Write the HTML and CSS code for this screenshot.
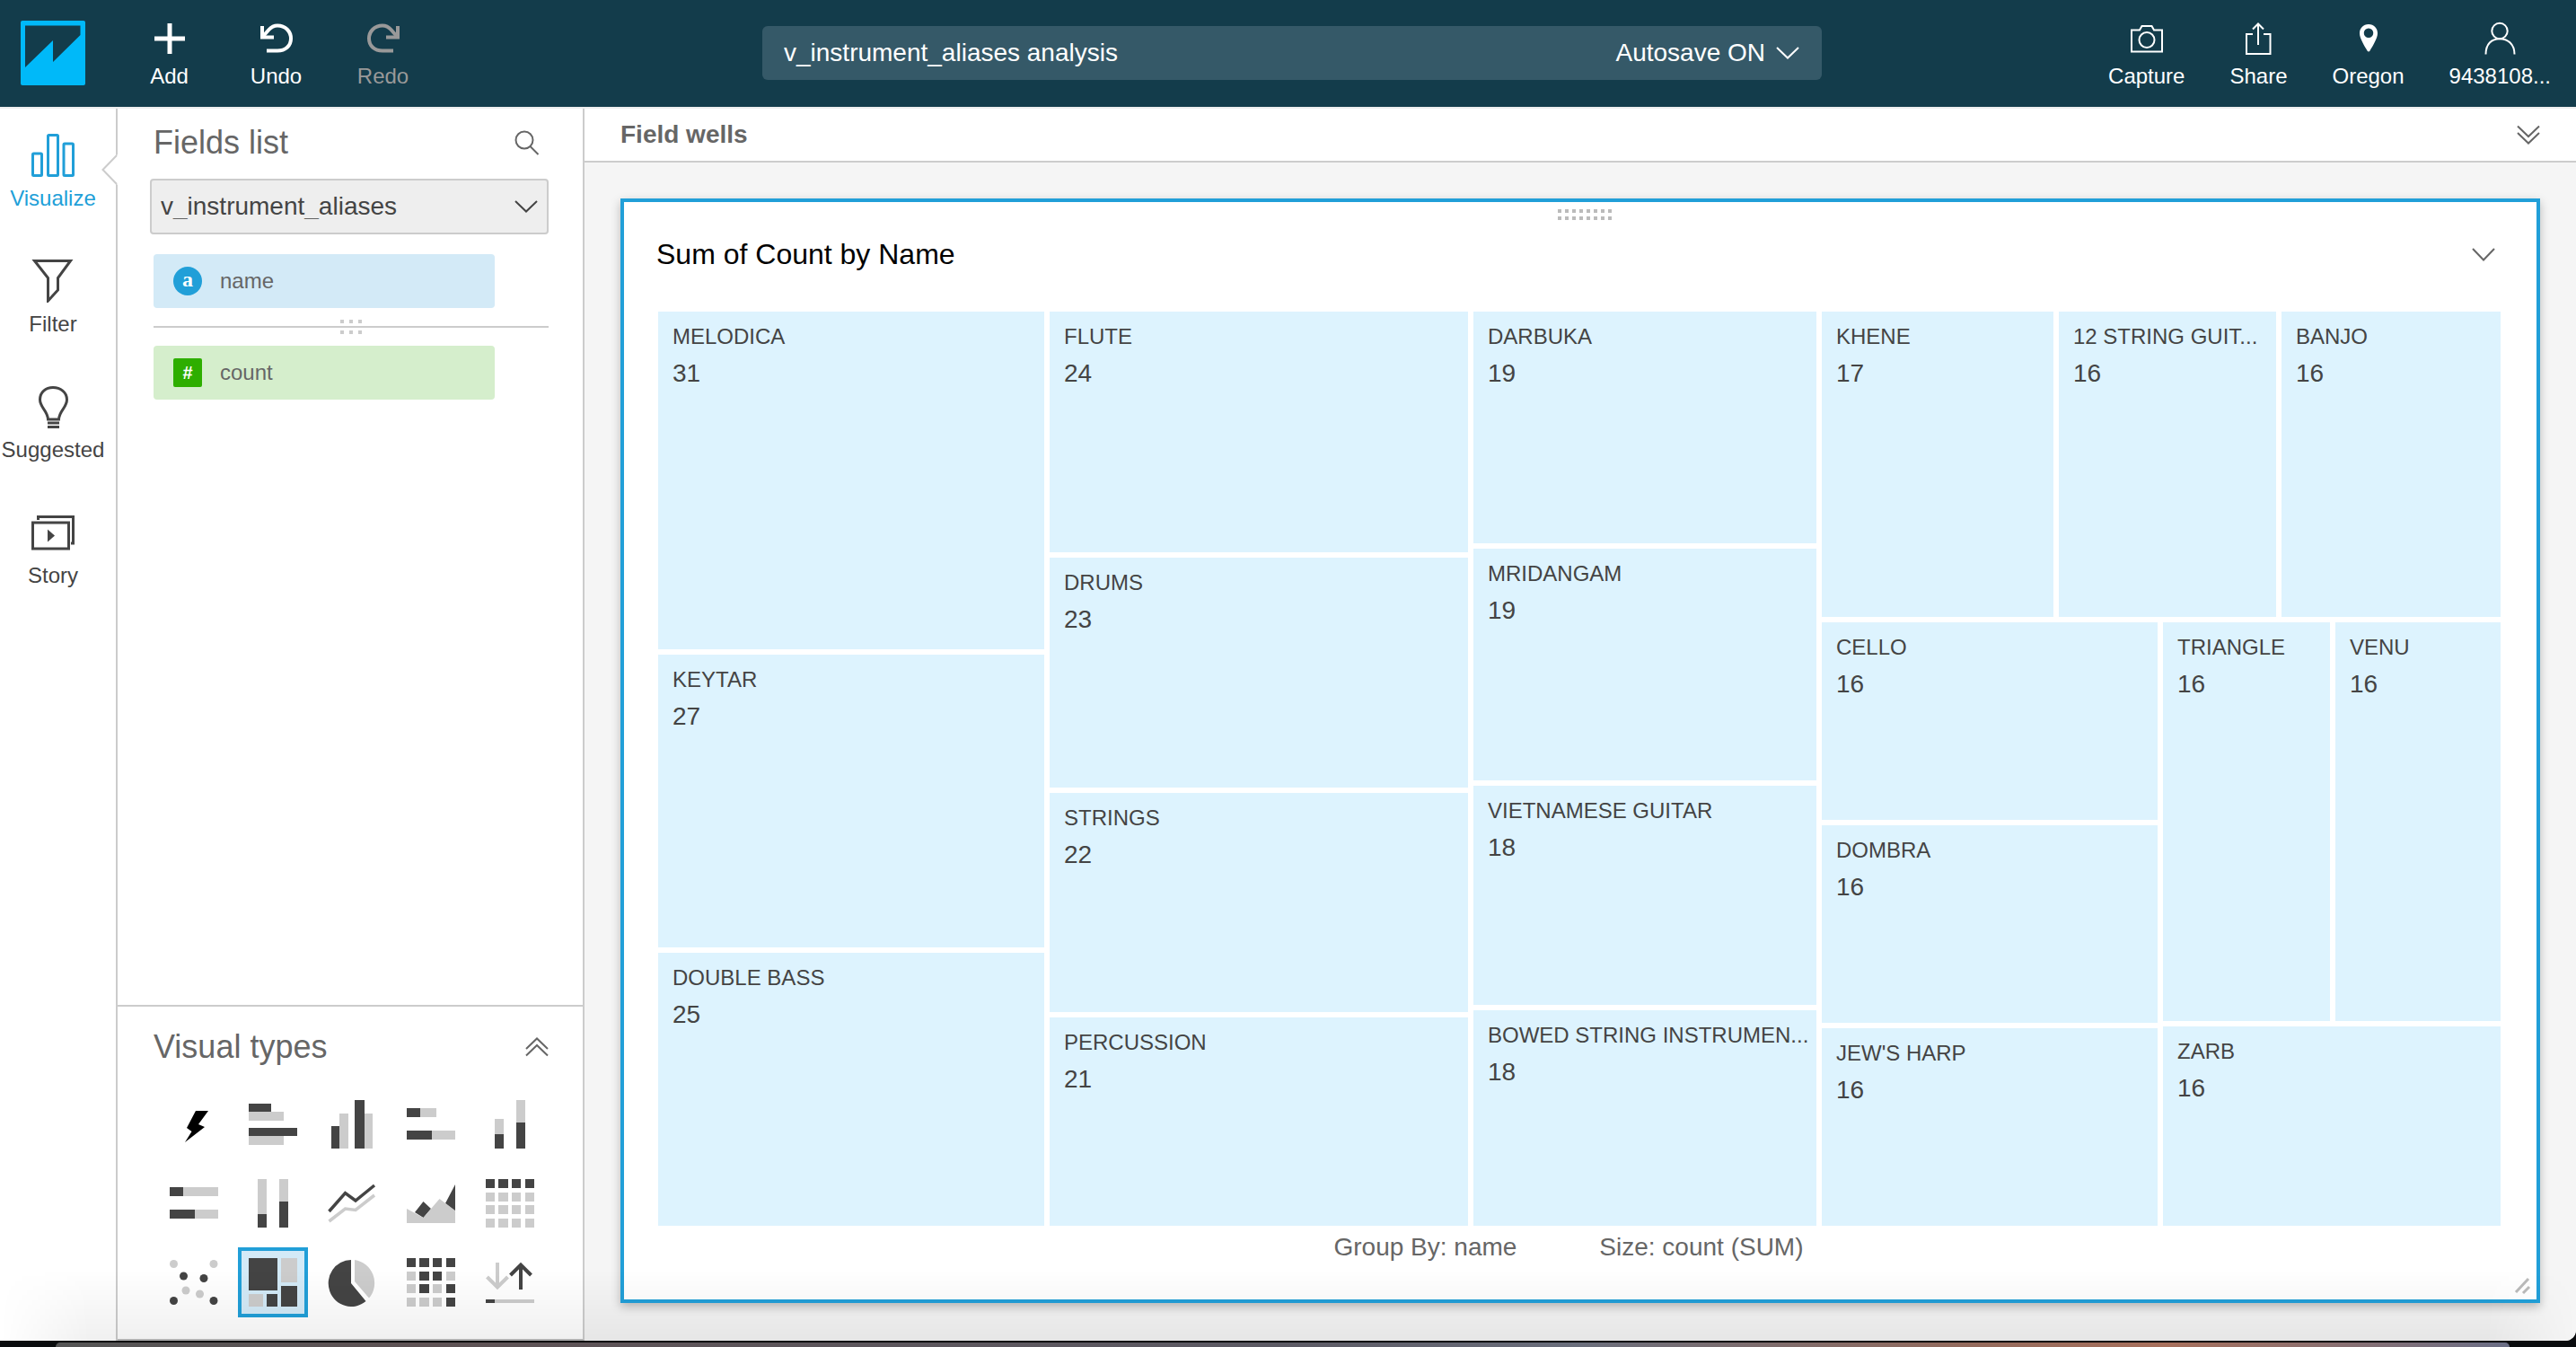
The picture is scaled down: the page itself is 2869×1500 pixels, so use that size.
FILE: index.html
```html
<!DOCTYPE html>
<html lang="en">
<head>
<meta charset="utf-8">
<title>v_instrument_aliases analysis</title>
<meta name="viewport" content="width=device-width, initial-scale=1">
<link rel="stylesheet" href="styles.css">
</head>
<body>
<div class="app">
  <header class="topbar">
    <div class="topbar-left">
      <a class="logo" href="#" aria-label="Home">
        <svg width="72" height="72" viewBox="0 0 72 72"><rect width="72" height="72" rx="2" fill="#00b9f9"/><path d="M5 5.500H66.500V16L36 46V22L5 52Z" fill="#133c4b"/></svg>
      </a>
      <button class="tool" type="button">
        <svg width="40" height="40" viewBox="0 0 40 40"><path d="M20 3V37M3 20H37" stroke-width="5"/></svg>
        <span>Add</span>
      </button>
      <button class="tool" type="button">
        <svg width="40" height="40" viewBox="0 0 40 40"><path d="M4 6V18.500H17" stroke-width="4"/><path d="M4.500 18L11.500 10Q15.500 5.500 21 5.500C30 5.500 36 12 36 20S30 33.500 21 33.500H9" stroke-width="4"/></svg>
        <span>Undo</span>
      </button>
      <button class="tool tool-off" type="button" disabled>
        <svg width="40" height="40" viewBox="0 0 40 40"><path d="M36 6V18.500H23" stroke-width="4"/><path d="M35.500 18L28.500 10Q24.500 5.500 19 5.500C10 5.500 4 12 4 20S10 33.500 19 33.500H31" stroke-width="4"/></svg>
        <span>Redo</span>
      </button>
    </div>
    <div class="titlebar">
      <input class="titlebar-name" type="text" value="v_instrument_aliases analysis" aria-label="Analysis name">
      <button class="autosave" type="button">Autosave ON
        <svg width="26" height="14" viewBox="0 0 26 14"><path d="M1 1L13 12.500L25 1"/></svg>
      </button>
    </div>
    <div class="topbar-right">
      <button class="action" type="button">
        <svg width="40" height="40" viewBox="0 0 40 40"><path d="M3 10.500H12L14.500 6H25.500L28 10.500H37V34.500H3Z"/><circle cx="20" cy="21.500" r="8.500"/></svg>
        <span>Capture</span>
      </button>
      <button class="action" type="button">
        <svg width="40" height="40" viewBox="0 0 40 40"><path d="M14 15H7V37H33.500V15H26M20 27V4M14 9.500L20 3.500L26 9.500"/></svg>
        <span>Share</span>
      </button>
      <button class="action" type="button">
        <svg width="40" height="40" viewBox="0 0 40 40"><path d="M20 4C14 4 10 8.500 10 14C10 20 16 29 18.500 33.500Q20 35.500 21.500 33.500C24 29 30 20 30 14C30 8.500 26 4 20 4ZM20 8.500A5.200 5.200 0 1 1 20 19A5.200 5.200 0 1 1 20 8.500Z" fill="#fff" fill-rule="evenodd" stroke="none"/></svg>
        <span>Oregon</span>
      </button>
      <button class="action" type="button">
        <svg width="40" height="40" viewBox="0 0 40 40"><circle cx="20" cy="11.500" r="8.700"/><path d="M4.500 37.500C4.500 26 11 20.200 20 20.200S36.500 26 36.500 37.500"/></svg>
        <span>9438108...</span>
      </button>
    </div>
  </header>

  <div class="body">
    <nav class="rail">
      <a class="rail-item rail-on" href="#">
        <svg width="48" height="48" viewBox="0 0 48 48"><rect x="1.500" y="22" width="10" height="24.500" rx="1"/><rect x="18.500" y="1.500" width="11" height="45" rx="1"/><rect x="36" y="11" width="10.500" height="35.500" rx="1"/></svg>
        <span>Visualize</span>
      </a>
      <a class="rail-item" href="#">
        <svg width="48" height="48" viewBox="0 0 48 48"><path d="M3.500 1.500H43.500L29.500 20.500V34L18.500 46V20.500Z"/></svg>
        <span>Filter</span>
      </a>
      <a class="rail-item" href="#">
        <svg width="48" height="48" viewBox="0 0 48 48"><path d="M18.500 38C18 28 9.500 25 9.500 16C9.500 7.500 16 2.500 24 2.500S39.500 7.500 39.500 16C39.500 25 31 28 30.500 38ZM18 42H31M18 46.500H31"/></svg>
        <span>Suggested</span>
      </a>
      <a class="rail-item" href="#">
        <svg width="48" height="48" viewBox="0 0 48 48"><rect x="1.500" y="13" width="40" height="29"/><path d="M7.500 10V6.500H46.500V36H44"/><path d="M18 20.500L26 27.500L18 34.500Z" fill="#444" stroke="none"/></svg>
        <span>Story</span>
      </a>
      <svg class="rail-notch" width="18" height="34" viewBox="0 0 18 34"><path d="M18 0L1.500 17L18 34Z" fill="#fff"/><path d="M17 1L1.500 17L17 33" fill="none" stroke="#ccc" stroke-width="2"/></svg>
    </nav>

    <aside class="side">
      <section class="fields">
        <div class="side-head">
          <h2>Fields list</h2>
          <button class="icon-btn" type="button" aria-label="Search fields">
            <svg width="28" height="28" viewBox="0 0 28 28"><circle cx="11" cy="11" r="9.500"/><path d="M17.500 18L26.500 27"/></svg>
          </button>
        </div>
        <div class="select-wrap">
          <select aria-label="Data set"><option>v_instrument_aliases</option></select>
          <svg width="26" height="14" viewBox="0 0 26 14"><path d="M1 1L13 12.500L25 1"/></svg>
        </div>
        <button class="pill pill-dim" type="button"><span class="badge badge-dim">a</span>name</button>
        <div class="divider"><i></i><i></i><i></i><i></i><i></i><i></i></div>
        <button class="pill pill-measure" type="button"><span class="badge badge-measure">#</span>count</button>
      </section>
      <section class="types">
        <div class="side-head">
          <h2>Visual types</h2>
          <button class="icon-btn" type="button" aria-label="Collapse visual types">
            <svg width="26" height="22" viewBox="0 0 26 22"><path d="M1 13L13 1.500L25 13M1 20.500L13 9L25 20.500"/></svg>
          </button>
        </div>
        <div class="type-grid">
          <button type="button" aria-label="AutoGraph"><svg viewBox="0 0 54 54"><path fill="#000" d="M29 12H43L32 27L39 30L17 47L24.500 35L19 31Z"/></svg></button>
          <button type="button" aria-label="Horizontal bar chart"><svg viewBox="0 0 54 54"><path class="l" d="M0 13H39V23H0ZM0 40H39V50H0Z"/><path class="d" d="M0 4H25V13H0ZM0 31H54V40H0Z"/></svg></button>
          <button type="button" aria-label="Vertical bar chart"><svg viewBox="0 0 54 54"><path class="l" d="M13 15H23V54H13ZM41 15H50V54H41Z"/><path class="d" d="M4 29H13V54H4ZM30 0H41V54H30Z"/></svg></button>
          <button type="button" aria-label="Horizontal stacked bar chart"><svg viewBox="0 0 54 54"><path class="l" d="M15 9H33V19H15ZM28 34H54V44H28Z"/><path class="d" d="M0 9H15V19H0ZM0 34H28V44H0Z"/></svg></button>
          <button type="button" aria-label="Vertical stacked bar chart"><svg viewBox="0 0 54 54"><path class="l" d="M10 21H20V38H10ZM34 0H44V25H34Z"/><path class="d" d="M10 38H20V54H10ZM34 25H44V54H34Z"/></svg></button>
          <button type="button" aria-label="Horizontal 100% bar chart"><svg viewBox="0 0 54 54"><path class="l" d="M15 9H54V19H15ZM28 34H54V44H28Z"/><path class="d" d="M0 9H15V19H0ZM0 34H28V44H0Z"/></svg></button>
          <button type="button" aria-label="Vertical 100% bar chart"><svg viewBox="0 0 54 54"><path class="l" d="M10 0H20V39H10ZM34 0H44V25H34Z"/><path class="d" d="M10 39H20V54H10ZM34 25H44V54H34Z"/></svg></button>
          <button type="button" aria-label="Line chart"><svg viewBox="0 0 54 54" fill="none" stroke-width="3.500"><path stroke="#ccc" d="M1.500 47L19.500 33L31 34.500L52 18"/><path stroke="#444" d="M1.500 36L19.500 15.500L31 24L52 7"/></svg></button>
          <button type="button" aria-label="Area chart"><svg viewBox="0 0 54 54"><path class="d" d="M9 37L18.500 25L27 33L18.500 43ZM54 6V36L43 27Z"/><path class="l" d="M0 33L18.500 43L36.500 22L54 35V49H0Z"/></svg></button>
          <button type="button" aria-label="Pivot table"><svg viewBox="0 0 54 54"><path class="d" d="M0 0h10v10h-10ZM14 0h11v10h-11ZM29 0h10v10h-10ZM44 0h10v10h-10Z"/><path class="l" d="M0 15h10v10h-10ZM14 15h11v10h-11ZM29 15h10v10h-10ZM44 15h10v10h-10ZM0 29h10v10h-10ZM14 29h11v10h-11ZM29 29h10v10h-10ZM44 29h10v10h-10ZM0 44h10v10h-10ZM14 44h11v10h-11ZM29 44h10v10h-10ZM44 44h10v10h-10Z"/></svg></button>
          <button type="button" aria-label="Scatter plot"><svg viewBox="0 0 54 54"><g class="l"><circle cx="4.500" cy="6.500" r="4.500"/><circle cx="49" cy="6.500" r="4.500"/><circle cx="18" cy="36" r="4.500"/><circle cx="33.500" cy="40" r="4.500"/></g><g class="d"><circle cx="15.500" cy="20" r="4.500"/><circle cx="38" cy="22.500" r="4.500"/><circle cx="4.500" cy="47.500" r="4.500"/><circle cx="49" cy="47.500" r="4.500"/></g></svg></button>
          <button class="on" type="button" aria-label="Tree map" aria-pressed="true"><svg viewBox="0 0 54 54"><path class="l" d="M36 0H54V27H36ZM0 40H16V54H0Z"/><path class="d" d="M0 0H32V36H0ZM20 40H32V54H20ZM36 31H54V54H36Z"/></svg></button>
          <button type="button" aria-label="Pie chart"><svg viewBox="0 0 54 54"><path class="d" d="M26 2A25.500 26 0 1 0 42.500 48L26 28Z"/><path class="l" d="M30 2A26 26 0 0 1 46 44.500L30 26Z"/></svg></button>
          <button type="button" aria-label="Heat map"><svg viewBox="0 0 54 54"><path class="d" d="M0 0h10v10h-10ZM14 0h11v10h-11ZM29 0h10v10h-10ZM44 0h10v10h-10ZM14 15h11v10h-11ZM29 15h10v10h-10ZM14 29h11v10h-11ZM44 29h10v10h-10ZM44 44h10v10h-10Z"/><path class="l" d="M0 15h10v10h-10ZM44 15h10v10h-10ZM0 29h10v10h-10ZM29 29h10v10h-10ZM0 44h10v10h-10ZM14 44h11v10h-11ZM29 44h10v10h-10Z"/></svg></button>
          <button type="button" aria-label="KPI"><svg viewBox="0 0 54 54"><path fill="none" stroke="#ccc" stroke-width="4" d="M13 5V32M1.500 21L13 32.500L24.500 21"/><path fill="none" stroke="#444" stroke-width="4" d="M39 35V8M27.500 19L39 7.500L50.500 19"/><path class="l" d="M10 46H54V50H10Z"/><path class="d" d="M0 46H10V50H0Z"/></svg></button>
        </div>
      </section>
    </aside>

    <main class="work">
      <div class="wells">
        <h2>Field wells</h2>
        <button class="icon-btn" type="button" aria-label="Expand field wells">
          <svg width="26" height="22" viewBox="0 0 26 22"><path d="M1 1.500L13 13L25 1.500M1 9L13 20.500L25 9"/></svg>
        </button>
      </div>
      <div class="canvas">
        <article class="card">
          <div class="grip"></div>
          <div class="card-head">
            <h1>Sum of Count by Name</h1>
            <button class="icon-btn" type="button" aria-label="Visual menu">
              <svg width="26" height="15" viewBox="0 0 26 15"><path d="M1 1L13 13.500L25 1"/></svg>
            </button>
          </div>
          <div class="treemap">
            <div class="col" style="flex-grow:430">
              <div class="cell" style="flex-grow:376"><b>MELODICA</b><span>31</span></div>
              <div class="cell" style="flex-grow:326"><b>KEYTAR</b><span>27</span></div>
              <div class="cell" style="flex-grow:304"><b>DOUBLE BASS</b><span>25</span></div>
            </div>
            <div class="col" style="flex-grow:466">
              <div class="cell" style="flex-grow:268"><b>FLUTE</b><span>24</span></div>
              <div class="cell" style="flex-grow:256"><b>DRUMS</b><span>23</span></div>
              <div class="cell" style="flex-grow:244"><b>STRINGS</b><span>22</span></div>
              <div class="cell" style="flex-grow:232"><b>PERCUSSION</b><span>21</span></div>
            </div>
            <div class="col" style="flex-grow:382">
              <div class="cell" style="flex-grow:258"><b>DARBUKA</b><span>19</span></div>
              <div class="cell" style="flex-grow:258"><b>MRIDANGAM</b><span>19</span></div>
              <div class="cell" style="flex-grow:244"><b>VIETNAMESE GUITAR</b><span>18</span></div>
              <div class="cell" style="flex-grow:240"><b>BOWED STRING INSTRUMEN...</b><span>18</span></div>
            </div>
            <div class="col" style="flex-grow:756">
              <div class="row" style="flex-grow:340">
                <div class="cell" style="flex-grow:258"><b>KHENE</b><span>17</span></div>
                <div class="cell" style="flex-grow:242"><b>12 STRING GUIT...</b><span>16</span></div>
                <div class="cell" style="flex-grow:244"><b>BANJO</b><span>16</span></div>
              </div>
              <div class="row" style="flex-grow:672">
                <div class="col" style="flex-grow:374">
                  <div class="cell" style="flex-grow:220"><b>CELLO</b><span>16</span></div>
                  <div class="cell" style="flex-grow:220"><b>DOMBRA</b><span>16</span></div>
                  <div class="cell" style="flex-grow:220"><b>JEW'S HARP</b><span>16</span></div>
                </div>
                <div class="col" style="flex-grow:376">
                  <div class="row" style="flex-grow:444">
                    <div class="cell" style="flex-grow:186"><b>TRIANGLE</b><span>16</span></div>
                    <div class="cell" style="flex-grow:184"><b>VENU</b><span>16</span></div>
                  </div>
                  <div class="cell" style="flex-grow:222"><b>ZARB</b><span>16</span></div>
                </div>
              </div>
            </div>
          </div>
          <div class="legend"><span>Group By: name</span><span>Size: count (SUM)</span></div>
          <svg class="resize" width="20" height="20" viewBox="0 0 20 20"><path d="M2 17L16 2M10 18L17 11" stroke="#bbb" stroke-width="3" fill="none"/></svg>
        </article>
      </div>
    </main>
    <div class="shade"></div>
  </div>
  <footer class="dock"><div class="dock-bar"></div></footer>
</div>
</body>
</html>
```
FILE: styles.css
```css
* { box-sizing: border-box; }

body {
  margin: 0;
  font-family: "Liberation Sans", Arial, Helvetica, sans-serif;
  font-size: 24px;
  line-height: 28px;
  color: #444;
}

h1, h2 { margin: 0; font-weight: normal; }

button, input, select { font: inherit; color: inherit; }
button { background: none; border: 0; padding: 0; cursor: pointer; }
svg { display: block; flex: none; }

.app {
  display: grid;
  grid-template-rows: auto minmax(0, 1fr) auto;
  height: 100vh;
  background: #0a0c0e;
}

/* Top bar */
.topbar {
  display: grid;
  grid-template-columns: 849px minmax(0, 1fr) 840px;
  align-items: start;
  padding: 23px 0 20px;
  background: #133c4b;
  color: #fff;
  border-bottom: 2px solid #eee;
}
.topbar svg { fill: none; stroke: #fff; stroke-width: 2; }
.topbar-left { display: flex; }
.logo { width: 129px; padding-left: 23px; }
.logo svg { stroke: none; }
.tool, .action {
  display: flex;
  flex-direction: column;
  align-items: center;
  gap: 8px;
}
.tool { width: 119px; }
.tool-off { color: #999; }
.tool-off svg { stroke: #999; }
.topbar-right {
  display: flex;
  justify-content: flex-end;
  gap: 50px;
  padding-right: 28px;
}
.titlebar {
  display: flex;
  align-items: center;
  height: 60px;
  margin-top: 6px;
  padding: 0 25px 0 24px;
  border-radius: 6px;
  background: #355968;
  font-size: 28px;
}
.titlebar-name {
  flex: 1;
  min-width: 0;
  padding: 0;
  border: 0;
  outline: 0;
  background: none;
}
.autosave { display: flex; align-items: center; gap: 12px; }

/* Main area below the top bar */
.body {
  position: relative;
  display: grid;
  grid-template-columns: 131px 520px minmax(0, 1fr);
  overflow: hidden;
  border-radius: 0 0 12px 0;
  background: #fff;
}

.rail {
  position: relative;
  display: flex;
  flex-direction: column;
  gap: 54px;
  padding-top: 28px;
  border-right: 2px solid #ccc;
}
.rail-item {
  display: flex;
  flex-direction: column;
  align-items: center;
  gap: 10px;
  width: 118px;
  color: #444;
  text-decoration: none;
}
.rail-item svg { fill: none; stroke: #444; stroke-width: 3; }
.rail-on { color: #219fd8; }
.rail-on svg { stroke: #219fd8; }
.rail-notch { position: absolute; top: 51px; right: -2px; }

.side {
  display: flex;
  flex-direction: column;
  border-right: 2px solid #ccc;
  border-bottom: 2px solid #bbb;
}
.side-head {
  display: flex;
  justify-content: space-between;
  align-items: center;
  font-size: 36px;
  line-height: 40px;
  color: #666;
}
.side-head h2 { font-size: 36px; }
.icon-btn svg { fill: none; stroke: #666; stroke-width: 2; }

.fields { flex: 1; padding: 18px 38px 0 36px; }
.fields .side-head { padding: 0 10px 0 4px; }
.select-wrap { position: relative; margin: 20px 0 22px; }
.select-wrap select {
  display: block;
  width: 100%;
  height: 62px;
  padding: 0 10px;
  border: 2px solid #ccc;
  border-radius: 4px;
  background: #eee;
  font-size: 28px;
  appearance: none;
}
.select-wrap svg {
  position: absolute;
  right: 12px;
  top: 24px;
  fill: none;
  stroke: #444;
  stroke-width: 2;
  pointer-events: none;
}
.pill {
  display: flex;
  align-items: center;
  gap: 20px;
  width: 380px;
  height: 60px;
  margin-left: 4px;
  padding-left: 22px;
  border-radius: 4px;
  color: #666;
}
.pill-dim { background: #d3eaf7; }
.pill-measure { background: #d5eecc; }
.badge {
  width: 32px;
  height: 32px;
  color: #fff;
  font-size: 20px;
  font-weight: bold;
  line-height: 32px;
  text-align: center;
}
.badge-dim { border-radius: 50%; background: #219fd8; font-family: "Liberation Serif", serif; font-size: 24px; line-height: 28px; }
.badge-measure { border-radius: 2px; background: #2eae00; }
.divider {
  display: grid;
  grid-template-columns: repeat(3, 4px);
  gap: 8px 6px;
  place-content: center;
  height: 42px;
  margin: 0 0 0 4px;
  background: linear-gradient(#ccc, #ccc) center / 100% 2px no-repeat;
}
.divider i { height: 4px; background: #ccc; }

.types { padding: 25px 38px 24px 40px; border-top: 2px solid #ccc; }
.types .side-head { padding-right: 0; }
.type-grid {
  display: grid;
  grid-template-columns: repeat(5, 78px);
  gap: 10px;
  margin: 27px 0 0 6px;
}
.type-grid button {
  display: grid;
  place-items: center;
  height: 78px;
  border: 4px solid transparent;
}
.type-grid svg { width: 54px; height: 54px; }
.type-grid .on { border-color: #219fd8; background: #d3eaf7; }
.d { fill: #444; }
.l { fill: #ccc; }

/* Workspace */
.work {
  display: flex;
  flex-direction: column;
  min-width: 0;
  background: #f5f5f5;
}
.wells {
  display: flex;
  justify-content: space-between;
  align-items: center;
  height: 60px;
  padding: 0 40px;
  border-bottom: 2px solid #ccc;
  background: #fff;
  color: #666;
}
.wells h2 { font-size: 28px; font-weight: bold; }
.canvas { display: flex; flex: 1; min-height: 0; padding: 40px 40px 42px; }
.card {
  position: relative;
  display: flex;
  flex-direction: column;
  flex: 1;
  min-width: 0;
  padding: 8px 40px 42px 38px;
  border: 4px solid #219fd8;
  background: #fff;
  box-shadow: 0 4px 10px rgba(0, 0, 0, .25);
}
.grip {
  align-self: center;
  width: 60px;
  height: 12px;
  margin-left: 12px;
  background: repeating-linear-gradient(90deg, #bbb 0 4px, transparent 4px 8px);
  -webkit-mask: repeating-linear-gradient(#000 0 4px, transparent 4px 8px);
  mask: repeating-linear-gradient(#000 0 4px, transparent 4px 8px);
}
.card-head {
  display: flex;
  justify-content: space-between;
  align-items: center;
  margin: 18px 0 44px -2px;
  padding-right: 6px;
  color: #000;
}
.card-head h1 { font-size: 32px; line-height: 40px; }

.treemap { display: flex; flex: 1; gap: 6px; min-height: 0; }
.col, .row { display: flex; gap: 6px; flex: 1 1 0; min-width: 0; min-height: 0; }
.col { flex-direction: column; }
.cell {
  display: flex;
  flex-direction: column;
  gap: 7px;
  flex: 1 1 0;
  min-width: 0;
  min-height: 0;
  overflow: hidden;
  background: #ddf3fe;
  white-space: nowrap;
}
.cell b { padding: 14px 0 0 16px; font-weight: normal; }
.cell span { padding-left: 16px; font-size: 28px; line-height: 40px; }

.legend {
  display: flex;
  justify-content: center;
  gap: 92px;
  padding: 8px 24px 0 0;
  color: #666;
  font-size: 28px;
  line-height: 32px;
}
.resize { position: absolute; right: 5px; bottom: 5px; }

/* Soft darkening along the lower window edge */
.shade {
  position: absolute;
  inset: auto 0 0;
  height: 80px;
  background: linear-gradient(rgba(0, 0, 0, 0), rgba(0, 0, 0, .06));
  -webkit-mask: linear-gradient(90deg, transparent, #000 100px calc(100% - 100px), transparent);
  mask: linear-gradient(90deg, transparent, #000 100px calc(100% - 100px), transparent);
  pointer-events: none;
}

.dock { padding: 2px 74px 0 62px; background: #0a0c0e; }
.dock-bar {
  height: 5px;
  border-radius: 6px 6px 0 0;
  background: linear-gradient(90deg, #555, #5e5254 15%, #5c5a64 50%, #6a6e7c 62%, #946a5c 78%, #a8705c 86%, #6a6e86);
}
```
